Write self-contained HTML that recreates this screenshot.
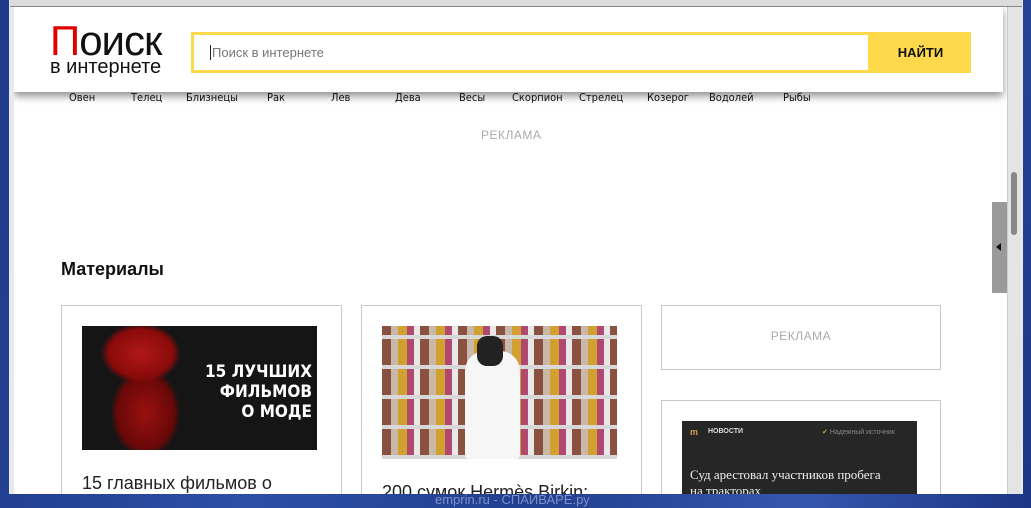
<!DOCTYPE html><html><head><meta charset="utf-8"><style>
*{margin:0;padding:0;box-sizing:border-box}
body{width:1031px;height:508px;overflow:hidden;position:relative;font-family:"Liberation Sans","DejaVu Sans",sans-serif;background:linear-gradient(100deg,#1f3a8a,#2c4fa6 30%,#213f8f 55%,#3556ad 80%,#1c3684)}
.a{position:absolute}
.win{left:9px;top:0;width:1014px;height:494px;background:#e9e9e9}
.page{left:14px;top:7px;width:993px;height:487px;background:#fff;overflow:hidden}
.z{position:absolute;top:84px;font-size:11px;color:#111;font-family:"DejaVu Sans Condensed","Liberation Sans Narrow",sans-serif}
.card{position:absolute;border:1px solid #c8c8c8;background:#fff}
</style></head><body>
<div class="a win"></div>
<div class="a" style="left:10px;top:0;width:1012px;height:7px;background:#dcdcdc;border-bottom:1px solid #888"></div>
<div class="a page">
 <div class="a" style="left:0;top:0;width:989px;height:85px;background:#fff;box-shadow:0 4px 8px rgba(0,0,0,.45);z-index:2">
  <div class="a" style="left:36px;top:14px;font-size:42px;line-height:40px;letter-spacing:-1px;color:#111"><span style="color:#e00000">П</span>оиск</div>
  <div class="a" style="left:36px;top:49px;font-size:20px;line-height:22px;color:#111">в интернете</div>
  <div class="a" style="left:177px;top:25px;width:680px;height:41px;border:3px solid #fdd94b"></div>
  <div class="a" style="left:196px;top:38px;font-size:13px;color:#777;border-left:1px solid #222;padding-left:1px;line-height:15px">Поиск в интернете</div>
  <div class="a" style="left:856px;top:25px;width:101px;height:41px;background:#fdd94b;font-weight:bold;font-size:13px;text-align:center;line-height:41px;color:#111">НАЙТИ</div>
 </div>
 <span class="z" style="left:55px">Овен</span><span class="z" style="left:117px">Телец</span><span class="z" style="left:172px">Близнецы</span><span class="z" style="left:253px">Рак</span><span class="z" style="left:317px">Лев</span><span class="z" style="left:381px">Дева</span><span class="z" style="left:445px">Весы</span><span class="z" style="left:498px">Скорпион</span><span class="z" style="left:565px">Стрелец</span><span class="z" style="left:633px">Козерог</span><span class="z" style="left:695px">Водолей</span><span class="z" style="left:769px">Рыбы</span>
 <div class="a" style="left:467px;top:121px;font-size:12px;color:#aaa;letter-spacing:.5px">РЕКЛАМА</div>
 <div class="a" style="left:47px;top:252px;font-size:18px;font-weight:bold;color:#111">Материалы</div>
 <div class="card" style="left:47px;top:298px;width:281px;height:200px">
  <div class="a" style="left:20px;top:20px;width:235px;height:124px;background:radial-gradient(ellipse 40px 30px at 25% 22%,#b01818 0,#8a0a0a 80%,transparent 100%),radial-gradient(ellipse 35px 45px at 27% 70%,#9a1010 0,#6a0808 80%,transparent 100%),#151515"></div>
  <div class="a" style="left:130px;top:56px;width:120px;font:bold 17px/20px 'DejaVu Sans Condensed',sans-serif;color:#fff;text-align:right">15 ЛУЧШИХ<br>ФИЛЬМОВ<br>О МОДЕ</div>
  <div class="a" style="left:20px;top:167px;font-size:18px;color:#222">15 главных фильмов о</div>
 </div>
 <div class="card" style="left:347px;top:298px;width:281px;height:200px">
  <div class="a" style="left:20px;top:20px;width:235px;height:133px;background:repeating-linear-gradient(0deg,#d8d8d8 0 4px,transparent 4px 30px),repeating-linear-gradient(90deg,#8a5040 0 9px,#c9b8a8 9px 16px,#d0a030 16px 25px,#b04870 25px 32px,#e8e8e8 32px 38px),#999"></div>
  <div class="a" style="left:103px;top:45px;width:55px;height:108px;background:#f6f6f6;border-radius:20px 20px 4px 4px"></div>
  <div class="a" style="left:115px;top:30px;width:26px;height:30px;background:#222;border-radius:10px"></div>
  <div class="a" style="left:20px;top:176px;font-size:18px;color:#222">200 сумок Hermès Birkin:</div>
 </div>
 <div class="card" style="left:647px;top:298px;width:280px;height:65px;text-align:center;line-height:61px;font-size:12px;color:#aaa;letter-spacing:.5px">РЕКЛАМА</div>
 <div class="card" style="left:647px;top:393px;width:280px;height:110px">
  <div class="a" style="left:20px;top:20px;width:235px;height:90px;background:#262626">
   <span class="a" style="left:8px;top:6px;font-size:9px;color:#c9a050;font-weight:bold">m</span>
   <span class="a" style="left:26px;top:7px;font-size:7px;color:#ddd;font-weight:bold">НОВОСТИ</span>
   <span class="a" style="left:140px;top:7px;font-size:7px;color:#888"><span style="color:#c9a050">✔</span> Надежный источник</span>
   <span class="a" style="left:8px;top:46px;font:13px 'Liberation Serif',serif;color:#eee;line-height:16px">Суд арестовал участников пробега<br>на тракторах</span>
  </div>
 </div>
 <div class="a" style="left:978px;top:195px;width:15px;height:91px;background:#9a9a9a"></div>
 <div class="a" style="left:982px;top:236px;width:0;height:0;border-top:4px solid transparent;border-bottom:4px solid transparent;border-right:5px solid #111"></div>
</div>
<div class="a" style="left:1007px;top:7px;width:14px;height:487px;background:#e4e4e4;border-left:1px solid #ccc"></div>
<div class="a" style="left:1011px;top:172px;width:6px;height:63px;background:#888;border-radius:3px"></div>
<div class="a" style="left:435px;top:492px;font-size:13px;color:rgba(200,210,240,.55)">emprin.ru - СПАЙВАРЕ.ру</div>
</body></html>
